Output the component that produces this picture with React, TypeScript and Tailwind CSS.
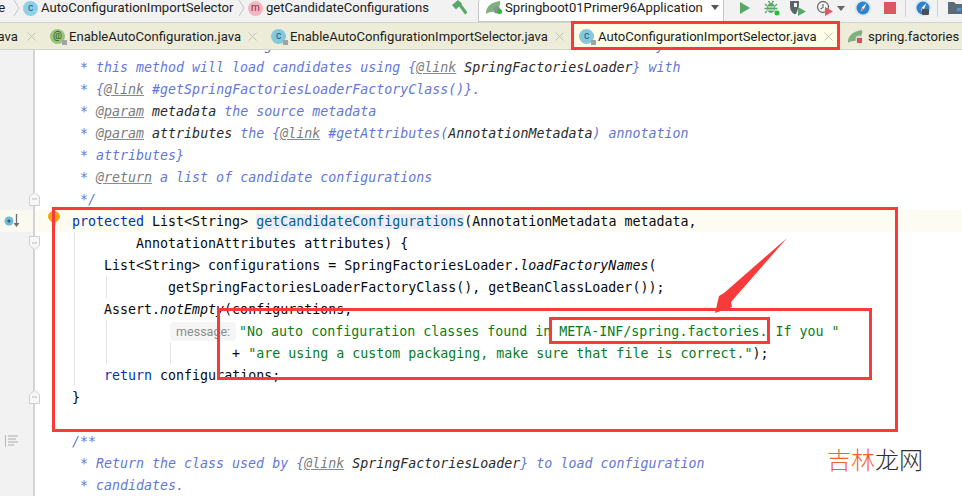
import { ReactNode } from 'react';

const uiFont = "font-['Roboto',sans-serif]";

function CircleIcon({ letter, color, text, lock }: { letter: string; color: string; text: string; lock?: boolean }) {
  return (
    <span className={`relative flex h-[15px] w-[15px] shrink-0 items-center justify-center rounded-full text-[10px] leading-none ${color} ${text}`}>
      {letter}
      {lock && <span className="absolute bottom-[-1px] right-[-2px] h-[5px] w-[5px] bg-[#a0a4a8]" />}
    </span>
  );
}

function Chevron() {
  return (
    <svg width="7" height="18" viewBox="0 0 7 18" className="shrink-0">
      <path d="M1 1 L6 9 L1 17" fill="none" stroke="#c4c4c4" strokeWidth="1" />
    </svg>
  );
}

function CloseX({ color = '#c4c4bc' }: { color?: string }) {
  return (
    <svg width="9" height="9" viewBox="0 0 9 9" className="shrink-0">
      <path d="M0.5 0.5 L8.5 8.5 M8.5 0.5 L0.5 8.5" stroke={color} strokeWidth="1" />
    </svg>
  );
}

function SpringLeaf({ dot }: { dot: string }) {
  return (
    <svg width="16" height="15" viewBox="0 0 16 15" className="shrink-0">
      <path d="M0 12 C1 5 7 2 14 1 C15 7 11 12 5 12 C3 12 1 13 0 14 Z" fill="#7fb17f" />
      <circle cx="11" cy="10" r="3.5" fill={dot === 'run' ? '#8a9298' : '#d9d9d9'} />
      <rect x={dot === 'run' ? 11 : 9} y="9" width="5" height="5" rx={dot === 'run' ? 2.5 : 0} fill={dot === 'run' ? '#22c02c' : '#d8505c'} />
    </svg>
  );
}

function Compass({ badge }: { badge?: boolean }) {
  return (
    <svg width="18" height="18" viewBox="0 0 18 18" className="shrink-0">
      <circle cx="9" cy="9" r="8.5" fill="#dfe9f2" />
      <circle cx="9" cy="9" r="6.5" fill="#2f82cc" />
      <path d="M12.5 4 L10 10 L7 12.5 L8 8.5 Z" fill="#ffffff" />
      <path d="M7 12.5 L8.5 9 L10 10 Z" fill="#e4706a" />
      {badge && <rect x="8" y="10" width="7" height="6" rx="1" fill="#4a5056" />}
    </svg>
  );
}

function TopBar() {
  return (
    <div className={`flex h-[22px] shrink-0 items-center overflow-hidden bg-[#f2f2f2] pb-[6px] text-[13.1px] text-[#1c1c1c] ${uiFont}`}>
      <span className="ml-[-6px] w-[14px] shrink-0">re</span>
      <span className="ml-[5px]"><Chevron /></span>
      <span className="ml-[3px]"><CircleIcon letter="c" color="bg-[#8ecfe8]" text="text-[#1f5f7a]" /></span>
      <span className="ml-[3px] w-[194px] shrink-0 whitespace-nowrap">AutoConfigurationImportSelector</span>
      <span className="ml-[3px]"><Chevron /></span>
      <span className="ml-[3px]"><CircleIcon letter="m" color="bg-[#f5b5c0]" text="text-[#8a2a3a]" /></span>
      <span className="ml-[3px] w-[164px] shrink-0 whitespace-nowrap">getCandidateConfigurations</span>
      <svg width="16" height="16" viewBox="0 0 16 16" className="ml-[22px] shrink-0">
        <path d="M0 5 L6 0 L10 3.5 L4 9.5 Z" fill="#59a869" />
        <path d="M6 5 L8.5 3 L15.5 12.5 L13 14.5 Z" fill="#59a869" />
      </svg>
      <div className="ml-[10px] flex h-[22px] w-[246px] shrink-0 translate-y-[3px] items-center rounded-tl-[3px] border-b border-l border-r border-[#c6c6c6] bg-white pb-[6px]">
        <span className="ml-[7px]"><SpringLeaf dot="run" /></span>
        <span className="ml-[3px] w-[198px] shrink-0 whitespace-nowrap">Springboot01Primer96Application</span>
        <span className="ml-[8px] h-0 w-0 border-x-[4px] border-t-[5px] border-x-transparent border-t-[#555]" />
      </div>
      <svg width="12" height="14" viewBox="0 0 12 14" className="ml-[15px] shrink-0">
        <path d="M1 1 L11 7 L1 13 Z" fill="#59a869" />
      </svg>
      <svg width="16" height="16" viewBox="0 0 16 16" className="ml-[13px] shrink-0">
        <ellipse cx="7" cy="8" rx="4" ry="5" fill="#59a869" />
        <path d="M1 4 L3 6 M13 4 L11 6 M0.5 8.5 H3 M13.5 8.5 H11 M1 13 L3 11 M13 13 L11 11 M4.5 1 L6 3 M9.5 1 L8 3" stroke="#59a869" strokeWidth="1.3" />
        <path d="M4 7 H10 M4 10 H10" stroke="#f2f2f2" strokeWidth="1" />
        <circle cx="13" cy="13" r="2.5" fill="#22c02c" />
      </svg>
      <svg width="18" height="16" viewBox="0 0 18 16" className="ml-[9px] shrink-0">
        <path d="M1 1 H10 V6 L7 14 H5 C2 12 1 9 1 6 Z" fill="#5d6268" />
        <path d="M5 3 H8 V7 H5 Z" fill="#f2f2f2" />
        <path d="M9 7 L17 11.5 L9 16 Z" fill="#59a869" />
      </svg>
      <svg width="18" height="16" viewBox="0 0 18 16" className="ml-[9px] shrink-0">
        <circle cx="7" cy="7" r="5.5" fill="none" stroke="#6e6e6e" strokeWidth="1.3" />
        <path d="M7 4 V7.5 L4.5 9" fill="none" stroke="#6e6e6e" strokeWidth="1.2" />
        <path d="M9 7 L17 11.5 L9 16 Z" fill="#db5860" />
      </svg>
      <span className="ml-[3px] h-0 w-0 shrink-0 border-x-[4px] border-t-[5px] border-x-transparent border-t-[#666]" />
      <span className="ml-[9px]"><Compass /></span>
      <span className="ml-[12px] h-[12px] w-[12px] shrink-0 bg-[#db5860]" />
      <span className="ml-[9px] h-[18px] w-px shrink-0 bg-[#d0d0d0]" />
      <span className="ml-[8px]"><Compass badge /></span>
      <span className="ml-[5px] h-[18px] w-px shrink-0 bg-[#d0d0d0]" />
      <svg width="18" height="14" viewBox="0 0 18 14" className="ml-[10px] shrink-0">
        <path d="M0 1 H6 L8 3 H18 V13 H0 Z" fill="#5d6b78" />
        <rect x="9" y="7" width="4" height="3" fill="#40a0e0" />
        <rect x="14" y="10" width="4" height="3" fill="#40a0e0" />
      </svg>
    </div>
  );
}

function TabBar() {
  return (
    <div className={`z-10 flex h-[28px] shrink-0 items-center overflow-hidden border-y border-[#d4d4c8] bg-[#edecd9] text-[13.1px] text-[#1c1c1c] ${uiFont}`}>
      <span className="ml-[-8px] w-[26px] shrink-0 pt-px text-right">ava</span>
      <span className="ml-[9px]"><CloseX /></span>
      <span className="ml-[14px]"><CircleIcon letter="@" color="bg-[#9ac47c]" text="text-[#2f5a20]" lock /></span>
      <span className="ml-[4px] w-[171px] shrink-0 whitespace-nowrap pt-px">EnableAutoConfiguration.java</span>
      <span className="ml-[8px]"><CloseX /></span>
      <span className="ml-[14px]"><CircleIcon letter="c" color="bg-[#85c8dc]" text="text-[#1f5f7a]" lock /></span>
      <span className="ml-[4px] w-[259px] shrink-0 whitespace-nowrap pt-px">EnableAutoConfigurationImportSelector.java</span>
      <span className="ml-[6px]"><CloseX /></span>
      <div className="ml-[7px] flex h-full w-[269px] shrink-0 items-center bg-[#fdfde8]">
        <span className="ml-[8px]"><CircleIcon letter="c" color="bg-[#85c8dc]" text="text-[#1f5f7a]" lock /></span>
        <span className="ml-[4px] w-[219px] shrink-0 whitespace-nowrap pt-px">AutoConfigurationImportSelector.java</span>
        <span className="ml-[7px]"><CloseX /></span>
      </div>
      <span className="ml-[8px]"><SpringLeaf dot="file" /></span>
      <span className="ml-[4px] shrink-0 whitespace-nowrap pt-px">spring.factories</span>
    </div>
  );
}

// doc comment pieces
function Tag({ children }: { children: ReactNode }) {
  return <span className="text-[#7c7c7c] underline decoration-[#8a8a8a]">{children}</span>;
}
function Ref({ children }: { children: ReactNode }) {
  return <span className="text-[#2b2b2b]">{children}</span>;
}
function Doc({ children }: { children: ReactNode }) {
  return <span className="text-[#6577d6] italic">{children}</span>;
}

function Line({ children, gutter, active }: { children?: ReactNode; gutter?: ReactNode; active?: boolean }) {
  return (
    <div className={`flex h-[22px] shrink-0 ${active ? 'bg-[#fdfcf2]' : ''}`}>
      <div className={`relative h-full w-[35px] shrink-0 border-r-2 border-[#d4d4d4] ${active ? 'bg-[#fbfaf0]' : 'bg-[#f2f2f2]'}`}>
        {gutter}
      </div>
      <div className="whitespace-pre pl-[37px] pt-px leading-[22px]">{children}</div>
    </div>
  );
}

function Fold({ up }: { up?: boolean }) {
  return (
    <svg width="11" height="14" viewBox="0 0 11 14" className="absolute left-[29px] top-[4px]">
      <path
        d={up ? 'M0.5 13.5 H10.5 V4.5 L5.5 0.5 L0.5 4.5 Z' : 'M0.5 0.5 H10.5 V9.5 L5.5 13.5 L0.5 9.5 Z'}
        fill="#f7f7f7"
        stroke="#cfcfcf"
      />
      <path d="M3 7 H8" stroke="#bdbdbd" />
    </svg>
  );
}

function Guide({ x, top, height }: { x: string; top: string; height: string }) {
  return <span className={`absolute w-px bg-[#e3e3e3] ${x} ${top} ${height}`} />;
}

function Box({ cls }: { cls: string }) {
  return <div className={`pointer-events-none absolute z-20 border-[3px] border-[#f93a3a] ${cls}`} />;
}

const kw = 'text-[#0033b3]';
const str = 'text-[#067d17]';

function Editor() {
  return (
    <div className="relative min-h-0 flex-1 overflow-hidden bg-white font-['DejaVu_Sans_Mono',monospace] text-[13.3px] text-[#080808]">
      <div className="mt-[-16px] flex flex-col">
        <Line><Doc> * Return the auto-configuration class names that should be considered. By default</Doc></Line>
        <Line><Doc> * this method will load candidates using {'{'}<Tag>@link</Tag> <Ref>SpringFactoriesLoader</Ref>{'}'} with</Doc></Line>
        <Line><Doc> * {'{'}<Tag>@link</Tag> #getSpringFactoriesLoaderFactoryClass(){'}'}.</Doc></Line>
        <Line><Doc> * <Tag>@param</Tag> <Ref>metadata</Ref> the source metadata</Doc></Line>
        <Line><Doc> * <Tag>@param</Tag> <Ref>attributes</Ref> the {'{'}<Tag>@link</Tag> #getAttributes(<Ref>AnnotationMetadata</Ref>) annotation</Doc></Line>
        <Line><Doc> * attributes{'}'}</Doc></Line>
        <Line><Doc> * <Tag>@return</Tag> a list of candidate configurations</Doc></Line>
        <Line gutter={<Fold up />}><Doc> */</Doc></Line>
        <Line
          active
          gutter={
            <svg width="16" height="16" viewBox="0 0 16 16" className="absolute left-[4px] top-[3px]">
              <circle cx="5" cy="8" r="4.5" fill="#6fbcd8" />
              <circle cx="5" cy="8" r="1.6" fill="#3a5a6a" />
              <path d="M12.5 1 V11" stroke="#6e6e6e" strokeWidth="1.3" />
              <path d="M9.5 10 H15.5 L12.5 14 Z" fill="#6e6e6e" />
            </svg>
          }
        >
          <span className={kw}>protected</span> List&lt;String&gt; <span className="bg-[#edebfc] text-[#00627a]">getCandidateConfigurations</span>(AnnotationMetadata metadata,
        </Line>
        <Line gutter={<Fold />}>        AnnotationAttributes attributes) {'{'}</Line>
        <Line>    List&lt;String&gt; configurations = SpringFactoriesLoader.<span className="italic">loadFactoryNames</span>(</Line>
        <Line>            getSpringFactoriesLoaderFactoryClass(), getBeanClassLoader());</Line>
        <Line>    Assert.<span className="italic">notEmpty</span>(configurations,</Line>
        <Line>
          <span>            </span>
          <span className={`ml-[2px] mr-[3px] inline-block h-[19px] w-[66px] rounded-[4px] bg-[#f5f5f5] text-center align-baseline text-[12.5px] leading-[19px] text-[#8c8c8c] ${uiFont}`}>message:</span>
          <span className={str}>"No auto configuration classes found in META-INF/spring.factories. If you "</span>
        </Line>
        <Line>                    + <span className={str}>"are using a custom packaging, make sure that file is correct."</span>);</Line>
        <Line>    <span className={kw}>return</span> configurations;</Line>
        <Line gutter={<Fold up />}>{'}'}</Line>
        <Line />
        <Line
          gutter={
            <svg width="13" height="12" viewBox="0 0 13 12" className="absolute left-[5px] top-[5px]">
              <path d="M0.5 0 V12" stroke="#b8b8b8" />
              <path d="M3 1 H13 M3 4 H11 M3 7 H13 M3 10 H9" stroke="#c4c4c4" strokeWidth="1.4" />
            </svg>
          }
        >
          <Doc>/**</Doc>
        </Line>
        <Line><Doc> * Return the class used by {'{'}<Tag>@link</Tag> <Ref>SpringFactoriesLoader</Ref>{'}'} to load configuration</Doc></Line>
        <Line><Doc> * candidates.</Doc></Line>
      </div>

      {/* indent guides */}
      <Guide x="left-[74px]" top="top-[182px]" height="h-[154px]" />
      <Guide x="left-[106px]" top="top-[226px]" height="h-[22px]" />
      <Guide x="left-[106px]" top="top-[270px]" height="h-[44px]" />
      <Guide x="left-[170px]" top="top-[292px]" height="h-[22px]" />

      {/* lightbulb */}
      <svg width="12" height="15" viewBox="0 0 12 15" className="absolute left-[48px] top-[161px]">
        <path d="M6 0 C9.5 0 12 2.5 12 5.5 C12 8 10 9 8.5 11 H3.5 C2 9 0 8 0 5.5 C0 2.5 2.5 0 6 0 Z" fill="#f2a60d" />
        <path d="M4 12 H8 M4.5 14 H7.5" stroke="#8a8a8a" strokeWidth="1" />
      </svg>
    </div>
  );
}

export default function App() {
  return (
    <div className="relative flex h-[496px] w-[962px] flex-col overflow-hidden bg-white">
      <TopBar />
      <TabBar />
      <Editor />

      {/* annotations drawn on top of the screenshot */}
      <Box cls="left-[571px] top-[21px] h-[29px] w-[269px]" />
      <Box cls="left-[52px] top-[207px] h-[225px] w-[846px]" />
      <Box cls="left-[217px] top-[308px] h-[72px] w-[655px]" />
      <Box cls="left-[549px] top-[317px] h-[27px] w-[221px]" />
      <svg width="962" height="496" viewBox="0 0 962 496" className="pointer-events-none absolute left-0 top-0 z-20">
        <path d="M787 238 L724 293 L719 296 L715 313 L732 307 L731 302 Z" fill="#f93a3a" />
      </svg>

      <div className="absolute left-[827px] top-[442px] z-20 font-['Noto_Sans_CJK_SC',sans-serif] text-[24px] font-light leading-[34px] text-[#2e2e2e]">
        <span className="text-[#f2622e]">吉林</span>龙网
      </div>
    </div>
  );
}
